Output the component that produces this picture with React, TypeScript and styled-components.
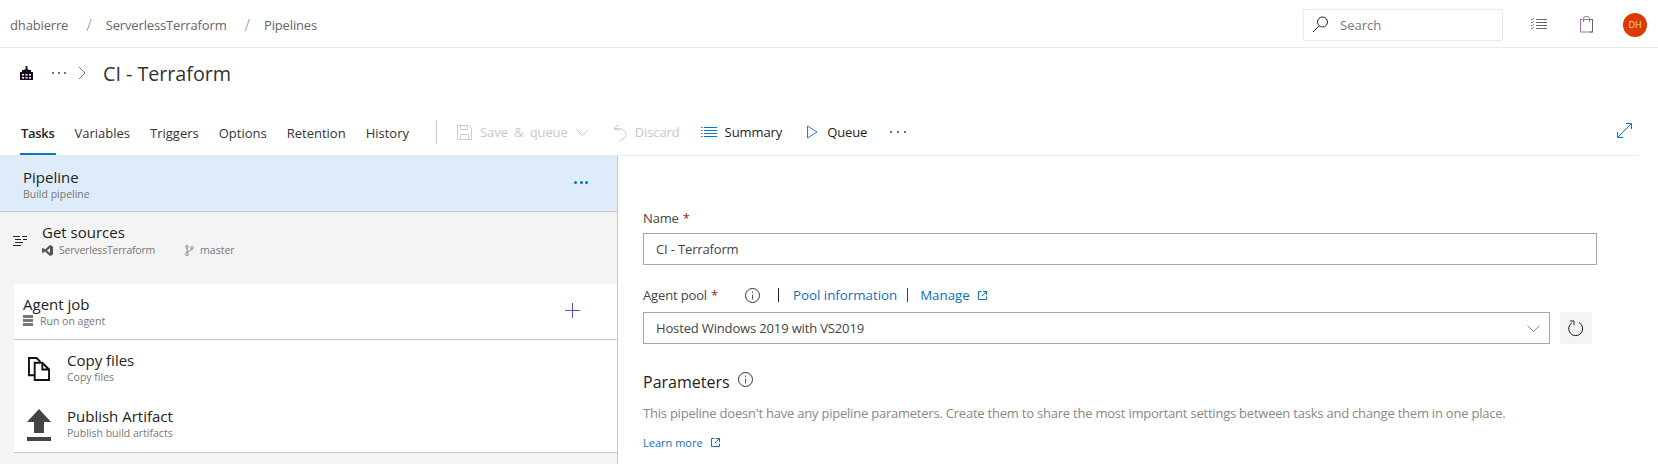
import styled, { createGlobalStyle } from "styled-components";

const GlobalStyle = createGlobalStyle`
  html, body {
    margin: 0;
    padding: 0;
    background: #fff;
    overflow: hidden;
  }
  body {
    font-family: "Open Sans", "Noto Sans", sans-serif;
    color: #333;
  }
`;

const Page = styled.div`
  width: 1658px;
  height: 464px;
  overflow: hidden;
  display: flex;
  flex-direction: column;
`;

const TopBar = styled.header`
  height: 48px;
  flex: none;
  box-sizing: border-box;
  border-bottom: 1px solid #eaeaea;
  display: flex;
  align-items: center;
  padding: 2px 11px 0 10px;
`;

const Crumb = styled.span`
  font-size: 13px;
  letter-spacing: -0.15px;
  color: #666;
`;

const CrumbSlash = styled.span`
  font-size: 16px;
  font-weight: 300;
  color: #8a8a8a;
  margin: 0 14px 0 18px;
`;

const TopRight = styled.div`
  margin-left: auto;
  display: flex;
  align-items: center;
`;

const SearchBox = styled.div`
  width: 200px;
  height: 32px;
  box-sizing: border-box;
  border: 1px solid #eaeaea;
  border-radius: 2px;
  display: flex;
  align-items: center;
  gap: 11px;
  padding-left: 8px;
  margin-right: 28px;
  font-size: 13px;
  color: #777;
`;

const IconSlot = styled.span<{ $left?: number; $right?: number; $top?: number }>`
  display: inline-flex;
  margin: ${(p) => p.$top ?? 0}px ${(p) => p.$right ?? 0}px 0 ${(p) => p.$left ?? 0}px;
`;

const Avatar = styled.div`
  width: 24px;
  height: 24px;
  border-radius: 50%;
  background: #da3b01;
  color: #f8d8c8;
  font-size: 9px;
  display: flex;
  align-items: center;
  justify-content: center;
`;

const TitleRow = styled.div`
  height: 50px;
  flex: none;
  display: flex;
  align-items: center;
  padding-left: 20px;
  box-sizing: border-box;
`;

const Dots = styled.span<{ $gap?: number; $left?: number; $right?: number; $bottom?: number }>`
  display: inline-flex;
  gap: ${(p) => p.$gap ?? 4}px;
  margin: 0 ${(p) => p.$right ?? 0}px ${(p) => p.$bottom ?? 0}px ${(p) => p.$left ?? 0}px;
`;

const Dot = styled.i<{ $color?: string; $size?: number }>`
  display: block;
  width: ${(p) => p.$size ?? 2}px;
  height: ${(p) => p.$size ?? 2}px;
  border-radius: 50%;
  background: ${(p) => p.$color ?? "#444"};
`;

const Title = styled.h1`
  margin: 0 0 0 17px;
  font-size: 19.8px;
  font-weight: 400;
  letter-spacing: -0.05px;
  color: #333;
`;

const ToolbarRow = styled.div`
  height: 58px;
  flex: none;
  margin-right: 19px;
  box-sizing: border-box;
  border-bottom: 1px solid #eaeaea;
  display: flex;
  align-items: flex-end;
  padding-left: 20px;
`;

const Tabs = styled.nav`
  display: flex;
  gap: 18px;
  align-self: flex-end;
`;

const Tab = styled.div<{ $active?: boolean }>`
  height: 36px;
  padding: 5px 1px 0;
  box-sizing: border-box;
  font-size: 13px;
  letter-spacing: ${(p) => (p.$active ? "-0.3px" : "0")};
  color: ${(p) => (p.$active ? "#222" : "#333")};
  font-weight: ${(p) => (p.$active ? 600 : 400)};
  border-bottom: 2px solid ${(p) => (p.$active ? "#0078d4" : "transparent")};
`;

const ToolDivider = styled.div`
  width: 1px;
  height: 24px;
  background: #c8c8c8;
  margin: 0 20px 11px 26px;
`;

const ToolButton = styled.div<{ $disabled?: boolean; $right?: number; $gap?: number; $words?: number }>`
  display: flex;
  align-items: center;
  gap: ${(p) => p.$gap ?? 8}px;
  height: 24px;
  margin: 0 ${(p) => p.$right ?? 0}px 11px 0;
  font-size: 13px;
  letter-spacing: -0.1px;
  word-spacing: ${(p) => p.$words ?? 0}px;
  color: ${(p) => (p.$disabled ? "#c8c8c8" : "#222")};
`;

const ExpandSlot = styled.span`
  margin: 0 7px 13px auto;
  display: inline-flex;
  height: 24px;
  align-items: center;
`;

const Body = styled.main`
  flex: 1;
  display: flex;
  min-height: 0;
`;

const LeftPane = styled.aside`
  width: 618px;
  flex: none;
  box-sizing: border-box;
  background: #f4f4f4;
  border-right: 1px solid #c8c8c8;
  display: flex;
  flex-direction: column;
`;

const PipelineRow = styled.div`
  height: 56px;
  flex: none;
  box-sizing: border-box;
  padding: 1px 29px 0 23px;
  background: #deecf9;
  border-bottom: 1px solid #c8c8c8;
  display: flex;
  align-items: center;
  justify-content: space-between;
`;

const Texts = styled.div`
  display: flex;
  flex-direction: column;
`;

const RowTitle = styled.div`
  font-size: 15px;
  line-height: 20px;
  color: #222;
`;

const RowSub = styled.div`
  font-size: 10.5px;
  line-height: 14px;
  color: #777;
  display: flex;
  align-items: center;
`;

const SourcesSub = styled(RowSub)`
  margin-top: 1px;
`;

const SourcesRow = styled.div`
  height: 72px;
  flex: none;
  box-sizing: border-box;
  display: flex;
  padding: 10px 0 0 13px;
  gap: 15px;
`;

const SourcesIcon = styled.span`
  padding-top: 9px;
`;

const SubGroup = styled.span<{ $left?: number; $gap?: number; $tight?: boolean }>`
  display: inline-flex;
  align-items: center;
  gap: ${(p) => p.$gap ?? 6}px;
  margin-left: ${(p) => p.$left ?? 0}px;
  letter-spacing: ${(p) => (p.$tight ? "-0.2px" : "0")};
`;

const JobCard = styled.section`
  margin-left: 14px;
  background: #fff;
  display: flex;
  flex-direction: column;
`;

const JobHead = styled.div`
  height: 56px;
  box-sizing: border-box;
  border-bottom: 1px solid #c8c8c8;
  display: flex;
  align-items: center;
  justify-content: space-between;
  padding: 0 37px 2px 9px;
`;

const PlusIcon = styled.svg`
  margin-bottom: 1px;
`;

const TaskList = styled.div`
  height: 113px;
  box-sizing: border-box;
  border-bottom: 1px solid #c8c8c8;
`;

const TaskRow = styled.div`
  height: 56px;
  box-sizing: border-box;
  display: flex;
  align-items: center;
  gap: 16px;
  padding: 0 0 2px 13px;
`;

const TaskIcon = styled.span`
  width: 24px;
  display: inline-flex;
  justify-content: center;
  margin-top: 4px;
`;

const RightPane = styled.section`
  flex: 1;
  box-sizing: border-box;
  padding: 53px 0 0 25px;
  display: flex;
  flex-direction: column;
`;

const FieldLabel = styled.div`
  display: flex;
  align-items: center;
  font-size: 13px;
  letter-spacing: -0.15px;
  line-height: 18px;
  height: 18px;
  color: #444;
`;

const Star = styled.span`
  color: #a4262c;
  margin-left: 4px;
`;

const Input = styled.div`
  width: 954px;
  height: 32px;
  margin-top: 6px;
  box-sizing: border-box;
  border: 1px solid #a6a6a6;
  padding-left: 12px;
  display: flex;
  align-items: center;
  font-size: 13px;
  letter-spacing: -0.15px;
  color: #444;
`;

const AgentLabel = styled(FieldLabel)`
  margin-top: 21px;
`;

const Bar = styled.span<{ $color: string; $left: number; $right: number }>`
  width: 1px;
  height: 14px;
  background: ${(p) => p.$color};
  margin: 0 ${(p) => p.$right}px 0 ${(p) => p.$left}px;
`;

const LinkText = styled.span<{ $size?: number }>`
  color: #106ebe;
  font-size: ${(p) => p.$size ?? 13.3}px;
  letter-spacing: 0;
`;

const SelectRow = styled.div`
  display: flex;
  align-items: flex-start;
  gap: 10px;
  margin-top: 8px;
`;

const Select = styled(Input)`
  width: 907px;
  margin-top: 0;
  justify-content: space-between;
  padding-right: 9px;
`;

const RefreshButton = styled.div`
  width: 32px;
  height: 32px;
  background: #f4f4f4;
  display: flex;
  align-items: center;
  justify-content: center;
`;

const SectionTitle = styled.h2`
  margin: 26px 0 0;
  display: flex;
  align-items: center;
  gap: 8px;
  font-size: 16px;
  line-height: 24px;
  font-weight: 400;
  color: #222;
`;

const Description = styled.p`
  margin: 10px 0 0;
  font-size: 13px;
  line-height: 18px;
  letter-spacing: -0.22px;
  color: #888;
`;

const LearnMore = styled.div`
  margin-top: 13px;
  display: flex;
  align-items: center;
  gap: 8px;
`;

const InfoIcon = () => (
  <svg width="15" height="15" viewBox="0 0 15 15" fill="none" stroke="#333">
    <circle cx="7.500" cy="7.500" r="7" />
    <path d="M7.500 6.500v5M7.500 3.500v1.500" stroke="#555" />
  </svg>
);

const ExternalIcon = () => (
  <svg width="9" height="9" viewBox="0 0 9 9" fill="none" stroke="#106ebe">
    <path d="M3.500.5H.5v8h8v-3M5 .5h3.500V4M8.500.5 4 5" />
  </svg>
);

export default function App() {
  return (
    <Page>
      <GlobalStyle />
      <TopBar>
        <Crumb>dhabierre</Crumb>
        <CrumbSlash>/</CrumbSlash>
        <Crumb>ServerlessTerraform</Crumb>
        <CrumbSlash>/</CrumbSlash>
        <Crumb>Pipelines</Crumb>
        <TopRight>
          <SearchBox>
            <svg width="17" height="17" viewBox="0 0 17 17" fill="none" stroke="#222">
              <circle cx="10.500" cy="6" r="5" />
              <path d="M7 10 1 16" />
            </svg>
            Search
          </SearchBox>
          <IconSlot $right={33}>
            <svg width="16" height="13" viewBox="0 0 16 13" fill="none" stroke="#666">
              <path d="M5 1.500h11M5 4.500h11M5 7.500h11M5 10.500h11" />
              <path d="M0 1l1 1 2-2M0 4l1 1 2-2M0 7l1 1 2-2M0 10l1 1 2-2" stroke="#888" />
            </svg>
          </IconSlot>
          <IconSlot $right={30}>
            <svg width="13" height="17" viewBox="0 0 13 17" fill="none">
              <rect x=".5" y="3.500" width="12" height="12.500" stroke="#b46bc4" />
              <path d="M3.500 6V2.500a2 2 0 0 1 2-2h2a2 2 0 0 1 2 2V6" stroke="#888" />
              <path d="M9.500 3.500h3v12.500h-3" stroke="#666" />
            </svg>
          </IconSlot>
          <Avatar>DH</Avatar>
        </TopRight>
      </TopBar>

      <TitleRow>
        <svg width="13" height="14" viewBox="0 0 13 14">
          <path d="M0 6h2V4h9v2h2v8H0z" fill="#1a0a20" />
          <path d="M5.500 0h2v3H9L6.500 5.500 4 3h1.500z" fill="#222" />
          <path d="M2 8h2v1.500H2zM5.500 8h2v1.500h-2zM9 8h2v1.500H9zM2 11h2v1.500H2zM5.500 11h2v1.500h-2zM9 11h2v1.500H9z" fill="#fff" />
        </svg>
        <Dots $left={19} $right={12}>
          <Dot />
          <Dot />
          <Dot />
        </Dots>
        <svg width="8" height="14" viewBox="0 0 8 14" fill="none" stroke="#777">
          <path d="m1 1 6 6-6 6" />
        </svg>
        <Title>CI - Terraform</Title>
      </TitleRow>

      <ToolbarRow>
        <Tabs>
          <Tab $active>Tasks</Tab>
          <Tab>Variables</Tab>
          <Tab>Triggers</Tab>
          <Tab>Options</Tab>
          <Tab>Retention</Tab>
          <Tab>History</Tab>
        </Tabs>
        <ToolDivider />
        <ToolButton $disabled $right={24} $words={3}>
          <svg width="15" height="15" viewBox="0 0 15 15" fill="none" stroke="#d0cccc">
            <path d="M.5.5h11l3 3v11H.5z" />
            <path d="M3.500.5v4h7v-4M3.500 14.500v-5h8v5" />
          </svg>
          Save &amp; queue
          <svg width="13" height="7" viewBox="0 0 13 7" fill="none" stroke="#c8c8c8">
            <path d="m.5.5 6 6 6-6" />
          </svg>
        </ToolButton>
        <ToolButton $disabled $right={21}>
          <svg width="14" height="17" viewBox="0 0 14 17" fill="none" stroke="#c8c8c8">
            <path d="M5.500.5 1 5l5.500 1.500M1 5c6-2 12 1 12 5.500 0 2.500-3 5-6 6" />
          </svg>
          Discard
        </ToolButton>
        <ToolButton $right={25}>
          <svg width="16" height="11" viewBox="0 0 16 11" fill="none" stroke="#0078d4">
            <path d="M3 .5h13M3 3.500h13M3 6.500h13M3 9.500h13M0 .5h1.500M0 3.500h1.500M0 6.500h1.500M0 9.500h1.500" />
          </svg>
          Summary
        </ToolButton>
        <ToolButton $right={23} $gap={9}>
          <svg width="11" height="14" viewBox="0 0 11 14" fill="none" stroke="#3b6fd8">
            <path d="M.5 1v12L10 7z" />
          </svg>
          Queue
        </ToolButton>
        <ToolButton>
          <Dots $gap={5}>
            <Dot />
            <Dot />
            <Dot />
          </Dots>
        </ToolButton>
        <ExpandSlot>
          <svg width="15" height="15" viewBox="0 0 15 15" fill="none" stroke="#0078d4">
            <path d="M1 14 14 1M9 .5h5.500V6M.5 9v5.500H6" />
          </svg>
        </ExpandSlot>
      </ToolbarRow>

      <Body>
        <LeftPane>
          <PipelineRow>
            <Texts>
              <RowTitle>Pipeline</RowTitle>
              <RowSub>Build pipeline</RowSub>
            </Texts>
            <Dots $gap={2.5} $bottom={4}>
              <Dot $color="#0078d4" $size={3} />
              <Dot $color="#0078d4" $size={3} />
              <Dot $color="#0078d4" $size={3} />
            </Dots>
          </PipelineRow>
          <SourcesRow>
            <SourcesIcon>
              <svg width="14" height="12" viewBox="0 0 14 12" fill="none" stroke="#222">
                <path d="M0 .5h7M9 .5h5M2 3.500h6M10 3.500h4M2 6.500h8M0 9.500h8" />
              </svg>
            </SourcesIcon>
            <Texts>
              <RowTitle>Get sources</RowTitle>
              <SourcesSub>
                <SubGroup $tight>
                  <svg width="11" height="11" viewBox="0 0 11 11">
                    <path d="M8 0l3 1.500v8L8 11 3 6.500 1 8 0 7.500v-4L1 3l2 1.500zm0 3L5 5.500 8 8z" fill="#555" fillRule="evenodd" />
                  </svg>
                  ServerlessTerraform
                </SubGroup>
                <SubGroup $left={30}>
                  <svg width="9" height="11" viewBox="0 0 9 11" fill="none" stroke="#888">
                    <circle cx="2" cy="1.800" r="1.300" />
                    <circle cx="2" cy="9.200" r="1.300" />
                    <circle cx="7" cy="2.800" r="1.300" />
                    <path d="M2 3v5M7 4c0 2-5 1.500-5 4" />
                  </svg>
                  master
                </SubGroup>
              </SourcesSub>
            </Texts>
          </SourcesRow>
          <JobCard>
            <JobHead>
              <Texts>
                <RowTitle>Agent job</RowTitle>
                <RowSub>
                  <SubGroup $gap={7}>
                    <svg width="10" height="11" viewBox="0 0 10 11">
                      <path d="M0 0h10v3H0zM0 4h10v3H0zM0 8h10v3H0z" fill="#777" />
                    </svg>
                    Run on agent
                  </SubGroup>
                </RowSub>
              </Texts>
              <PlusIcon width="15" height="15" viewBox="0 0 15 15" fill="none" stroke="#5a4fcf">
                <path d="M7.500 0v15M0 7.500h15" />
              </PlusIcon>
            </JobHead>
            <TaskList>
              <TaskRow>
                <TaskIcon>
                  <svg width="22" height="24" viewBox="0 0 23 25" fill="none" stroke="#111" strokeWidth="2">
                    <path d="M7 19H1V1h8l4 4" />
                    <path d="M7 6h8l7 7v11H7zM15 6v7h7" fill="#fff" />
                  </svg>
                </TaskIcon>
                <Texts>
                  <RowTitle>Copy files</RowTitle>
                  <RowSub>Copy files</RowSub>
                </Texts>
              </TaskRow>
              <TaskRow>
                <TaskIcon>
                  <svg width="24" height="32" viewBox="0 0 24 32" fill="#444">
                    <path d="M12 0l12 13h-7v11H7V13H0z" />
                    <path d="M0 28h24v4H0z" />
                  </svg>
                </TaskIcon>
                <Texts>
                  <RowTitle>Publish Artifact</RowTitle>
                  <RowSub>Publish build artifacts</RowSub>
                </Texts>
              </TaskRow>
            </TaskList>
          </JobCard>
        </LeftPane>

        <RightPane>
          <FieldLabel>
            Name<Star>*</Star>
          </FieldLabel>
          <Input>CI - Terraform</Input>
          <AgentLabel>
            Agent pool<Star>*</Star>
            <IconSlot $left={27}>
              <InfoIcon />
            </IconSlot>
            <Bar $color="#222" $left={18} $right={14} />
            <LinkText>Pool information</LinkText>
            <Bar $color="#5c2d91" $left={10} $right={12} />
            <LinkText>Manage</LinkText>
            <IconSlot $left={8}>
              <ExternalIcon />
            </IconSlot>
          </AgentLabel>
          <SelectRow>
            <Select>
              Hosted Windows 2019 with VS2019
              <svg width="13" height="7" viewBox="0 0 13 7" fill="none" stroke="#888">
                <path d="m.5.5 6 6 6-6" />
              </svg>
            </Select>
            <RefreshButton>
              <svg width="16" height="17" viewBox="0 0 16 17" fill="none" stroke="#222">
                <path d="M11 2.500a7 7 0 1 1-7 .2" />
                <path d="M2 1h4v4" />
              </svg>
            </RefreshButton>
          </SelectRow>
          <SectionTitle>
            Parameters
            <IconSlot $top={-5}>
              <InfoIcon />
            </IconSlot>
          </SectionTitle>
          <Description>
            This pipeline doesn't have any pipeline parameters. Create them to share the most
            important settings between tasks and change them in one place.
          </Description>
          <LearnMore>
            <LinkText $size={11}>Learn more</LinkText>
            <ExternalIcon />
          </LearnMore>
        </RightPane>
      </Body>
    </Page>
  );
}
